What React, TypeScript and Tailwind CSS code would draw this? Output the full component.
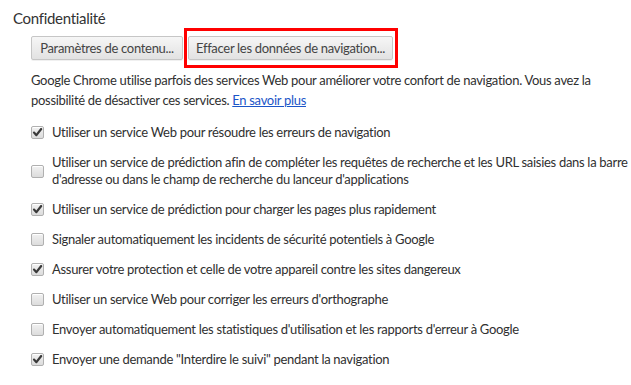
import React from "react";

type Option = { label: React.ReactNode; checked: boolean };

const options: Option[] = [
  { label: "Utiliser un service Web pour résoudre les erreurs de navigation", checked: true },
  {
    label: (
      <>
        Utiliser un service de prédiction afin de compléter les requêtes de recherche et les URL saisies dans la barre
        <br />
        d'adresse ou dans le champ de recherche du lanceur d'applications
      </>
    ),
    checked: false,
  },
  { label: "Utiliser un service de prédiction pour charger les pages plus rapidement", checked: true },
  { label: "Signaler automatiquement les incidents de sécurité potentiels à Google", checked: false },
  { label: "Assurer votre protection et celle de votre appareil contre les sites dangereux", checked: true },
  { label: "Utiliser un service Web pour corriger les erreurs d'orthographe", checked: false },
  { label: "Envoyer automatiquement les statistiques d'utilisation et les rapports d'erreur à Google", checked: false },
  { label: "Envoyer une demande \"Interdire le suivi\" pendant la navigation", checked: true },
];

const Checkbox = ({ checked }: { checked: boolean }) => (
  <span className="relative flex h-[13px] w-[13px] shrink-0 items-center justify-center rounded-[2px] border border-[#b0b0b0] bg-gradient-to-b from-[#f2f2f2] to-[#dcdcdc] shadow-[inset_0_1px_0_#fff]">
    {checked && (
      <svg viewBox="0 0 13 13" className="absolute left-[-1px] top-[-1px] h-[13px] w-[13px]">
        <path d="M3 6.6 L5.4 9.2 L10.2 3" fill="none" stroke="#3a3a3a" strokeWidth="2.2" strokeLinecap="round" strokeLinejoin="round" />
      </svg>
    )}
  </span>
);

const Button = ({ children, w }: { children: React.ReactNode; w: string }) => (
  <button
    className={`${w} h-[24px] whitespace-nowrap rounded-[2px] border border-[#c6c6c6] bg-gradient-to-b from-[#f6f6f6] to-[#e2e2e2] text-center text-[13px] leading-[20px] tracking-[-0.3px] text-[#444] shadow-[0_1px_0_rgba(0,0,0,0.06)]`}
  >
    {children}
  </button>
);

const App = () => (
  <div className="min-h-[385px] w-[631px] bg-white font-['Lato',sans-serif] text-[13px] tracking-[-0.3px] text-[#303030]">
    <div className="pl-[13px] pt-[8px]">
      <h2 className="text-[15px] leading-[20px] text-[#333]">Confidentialité</h2>
      <div className="pl-[18px]">
        <div className="mt-[8px] flex gap-[5px]">
          <Button w="w-[152px]">Paramètres de contenu...</Button>
          <div className="relative">
            <Button w="w-[205px]">Effacer les données de navigation...</Button>
            <span className="pointer-events-none absolute -bottom-[8px] -left-[4px] -right-[5px] -top-[8px] border-[3px] border-[#ff0000]" />
          </div>
        </div>
        <p className="mt-[10px] leading-[20px]">
          Google Chrome utilise parfois des services Web pour améliorer votre confort de navigation. Vous avez la
          <br />
          possibilité de désactiver ces services.{" "}
          <a href="#" className="text-[#1b55c8] underline">
            En savoir plus
          </a>
        </p>
        <ul className="mt-[14px] flex flex-col gap-[13px]">
          {options.map((o, i) => (
            <li key={i} className="flex items-center gap-[8px] leading-[17px]">
              <Checkbox checked={o.checked} />
              <span className="whitespace-nowrap">{o.label}</span>
            </li>
          ))}
        </ul>
      </div>
    </div>
  </div>
);

export default App;
